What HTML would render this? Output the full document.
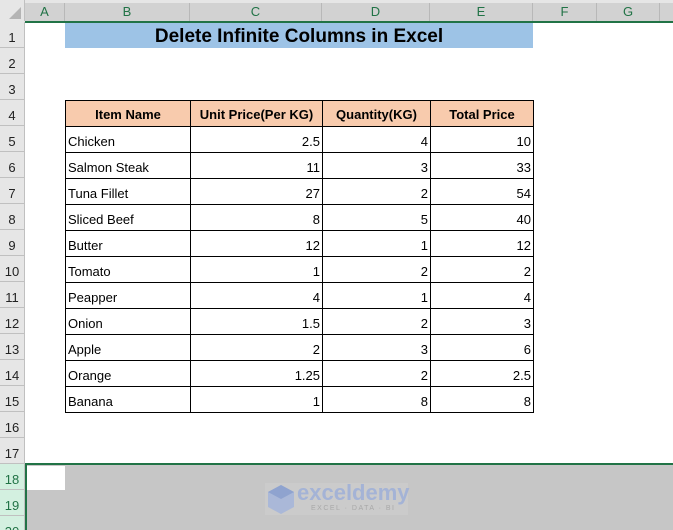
<!DOCTYPE html>
<html><head><meta charset="utf-8"><style>
*{margin:0;padding:0;box-sizing:border-box}
html,body{width:673px;height:530px;overflow:hidden}
body{background:#fff;font-family:"Liberation Sans",Calibri,sans-serif;position:relative}
.a{position:absolute}
.ch{position:absolute;top:3px;height:18px;background:#d2d2d2;border-right:1px solid #b8b8b8;color:#217346;font-size:13px;text-align:center;line-height:18px}
.rh{position:absolute;left:0;width:25px;height:26px;background:#e6e6e6;border-bottom:1px solid #c0c0c0;color:#222;font-size:13px;text-align:center;line-height:32px;border-right:1px solid #c0c0c0}
table{position:absolute;left:65px;top:100px;border-collapse:collapse;table-layout:fixed}
td{height:26px;border:1px solid #000;font-size:13px;padding:0 2px 2px;vertical-align:bottom;line-height:16px;white-space:nowrap;overflow:hidden}
td.r{text-align:right}
tr.h td{background:#f8cbad;font-weight:bold;text-align:center;vertical-align:middle;padding:2px 0 0}
</style></head><body>
<div class="a" style="left:0;top:0;width:673px;height:22px;background:#e6e6e6"></div>
<div class="a" style="left:0;top:0;width:25px;height:21px;background:#e6e6e6;border-right:1px solid #c0c0c0"></div>
<svg class="a" style="left:8px;top:6px" width="14" height="14"><polygon points="13,1 13,13 1,13" fill="#b4b4b4"/></svg>
<div class="ch" style="left:25px;width:40px">A</div>
<div class="ch" style="left:65px;width:125px">B</div>
<div class="ch" style="left:190px;width:132px">C</div>
<div class="ch" style="left:322px;width:108px">D</div>
<div class="ch" style="left:430px;width:103px">E</div>
<div class="ch" style="left:533px;width:64px">F</div>
<div class="ch" style="left:597px;width:63px">G</div>
<div class="ch" style="left:660px;width:20px"></div>
<div class="a" style="left:25px;top:21px;width:648px;height:2px;background:#217346"></div>

<div class="rh" style="top:22px">1</div><div class="rh" style="top:48px">2</div><div class="rh" style="top:74px">3</div><div class="rh" style="top:100px">4</div><div class="rh" style="top:126px">5</div><div class="rh" style="top:152px">6</div><div class="rh" style="top:178px">7</div><div class="rh" style="top:204px">8</div><div class="rh" style="top:230px">9</div><div class="rh" style="top:256px">10</div><div class="rh" style="top:282px">11</div><div class="rh" style="top:308px">12</div><div class="rh" style="top:334px">13</div><div class="rh" style="top:360px">14</div><div class="rh" style="top:386px">15</div><div class="rh" style="top:412px">16</div><div class="rh" style="top:438px">17</div>
<div class="rh" style="top:464px;background:#d3f0e0;color:#217346">18</div>
<div class="rh" style="top:490px;background:#d3f0e0;color:#217346">19</div>
<div class="rh" style="top:516px;background:#d3f0e0;color:#217346">20</div>

<div class="a" style="left:65px;top:23px;width:468px;height:25px;background:#9dc3e6;font-weight:bold;font-size:19px;text-align:center;line-height:27px;color:#000">Delete Infinite Columns in Excel</div>

<table>
<colgroup><col style="width:125px"><col style="width:132px"><col style="width:108px"><col style="width:103px"></colgroup>
<tr class="h"><td>Item Name</td><td>Unit Price(Per KG)</td><td>Quantity(KG)</td><td>Total Price</td></tr>
<tr><td>Chicken</td><td class="r">2.5</td><td class="r">4</td><td class="r">10</td></tr>
<tr><td>Salmon Steak</td><td class="r">11</td><td class="r">3</td><td class="r">33</td></tr>
<tr><td>Tuna Fillet</td><td class="r">27</td><td class="r">2</td><td class="r">54</td></tr>
<tr><td>Sliced Beef</td><td class="r">8</td><td class="r">5</td><td class="r">40</td></tr>
<tr><td>Butter</td><td class="r">12</td><td class="r">1</td><td class="r">12</td></tr>
<tr><td>Tomato</td><td class="r">1</td><td class="r">2</td><td class="r">2</td></tr>
<tr><td>Peapper</td><td class="r">4</td><td class="r">1</td><td class="r">4</td></tr>
<tr><td>Onion</td><td class="r">1.5</td><td class="r">2</td><td class="r">3</td></tr>
<tr><td>Apple</td><td class="r">2</td><td class="r">3</td><td class="r">6</td></tr>
<tr><td>Orange</td><td class="r">1.25</td><td class="r">2</td><td class="r">2.5</td></tr>
<tr><td>Banana</td><td class="r">1</td><td class="r">8</td><td class="r">8</td></tr>
</table>

<div class="a" style="left:25px;top:463px;width:648px;height:2px;background:#217346"></div>
<div class="a" style="left:25px;top:463px;width:2px;height:67px;background:#217346"></div>
<div class="a" style="left:27px;top:465px;width:646px;height:65px;background:#c6c6c6"></div>
<div class="a" style="left:27px;top:466px;width:38px;height:24px;background:#fff"></div>
<div class="a" style="left:265px;top:483px;width:143px;height:32px;background:#cbcbcb"></div>
<svg class="a" style="left:266px;top:483px" width="30" height="32"><polygon points="15,2 28,9 28,24 15,31 2,24 2,9" fill="#aab8d8"/><polygon points="15,2 28,9 15,16 2,9" fill="#8fa3cf"/></svg>
<div class="a" style="left:297px;top:480px;font-size:22px;font-weight:bold;color:#a4b3d6">exceldemy</div>
<div class="a" style="left:311px;top:505px;font-size:7px;letter-spacing:1.5px;color:#a8a8a8">EXCEL · DATA · BI</div>
</body></html>
